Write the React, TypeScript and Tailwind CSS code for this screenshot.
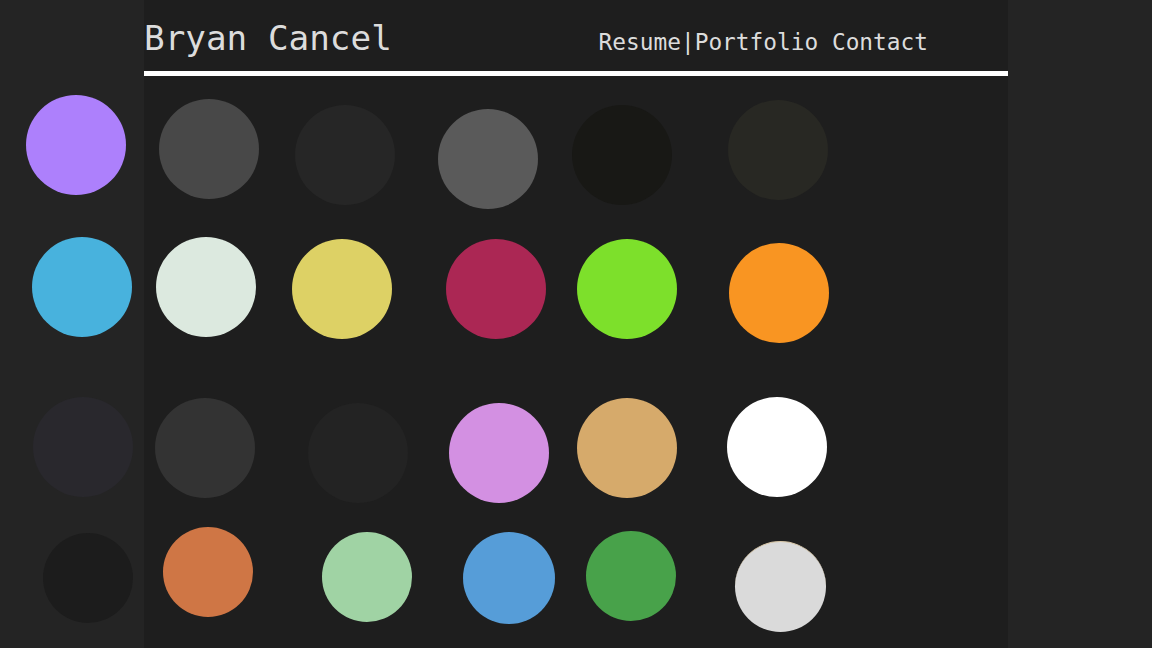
import React from "react";

const rows: { h: string; dots: string[] }[] = [
  {
    h: "h-[142px]",
    dots: [
      "ml-[26px] mt-0 w-[100px] h-[100px] bg-[#ad80fc]",
      "ml-[33px] mt-[4px] w-[100px] h-[100px] bg-[#484848]",
      "ml-[36px] mt-[10px] w-[100px] h-[100px] bg-[#262626]",
      "ml-[43px] mt-[14px] w-[100px] h-[100px] bg-[#5a5a5a]",
      "ml-[34px] mt-[10px] w-[100px] h-[100px] bg-[#181815]",
      "ml-[56px] mt-[5px] w-[100px] h-[100px] bg-[#282823]",
    ],
  },
  {
    h: "h-[160px]",
    dots: [
      "ml-[32px] mt-0 w-[100px] h-[100px] bg-[#48b2dd]",
      "ml-[24px] mt-0 w-[100px] h-[100px] bg-[#dce9df]",
      "ml-[36px] mt-[2px] w-[100px] h-[100px] bg-[#ddd165]",
      "ml-[54px] mt-[2px] w-[100px] h-[100px] bg-[#ab2754]",
      "ml-[31px] mt-[2px] w-[100px] h-[100px] bg-[#7de02b]",
      "ml-[52px] mt-[6px] w-[100px] h-[100px] bg-[#f99522]",
    ],
  },
  {
    h: "h-[130px]",
    dots: [
      "ml-[33px] mt-0 w-[100px] h-[100px] bg-[#29282d]",
      "ml-[22px] mt-[1px] w-[100px] h-[100px] bg-[#333333]",
      "ml-[53px] mt-[6px] w-[100px] h-[100px] bg-[#232323]",
      "ml-[41px] mt-[6px] w-[100px] h-[100px] bg-[#d390e2]",
      "ml-[28px] mt-[1px] w-[100px] h-[100px] bg-[#d6aa6b]",
      "ml-[50px] mt-0 w-[100px] h-[100px] bg-[#ffffff]",
    ],
  },
  {
    h: "h-[121px]",
    dots: [
      "ml-[43px] mt-[6px] w-[90px] h-[90px] bg-[#1c1c1c]",
      "ml-[30px] mt-0 w-[90px] h-[90px] bg-[#cf7645]",
      "ml-[69px] mt-[5px] w-[90px] h-[90px] bg-[#a0d3a4]",
      "ml-[51px] mt-[5px] w-[92px] h-[92px] bg-[#569dd8]",
      "ml-[31px] mt-[4px] w-[90px] h-[90px] bg-[#48a24a]",
      "ml-[59px] mt-[14px] w-[91px] h-[91px] bg-[#dadada] border-t border-[#d8c7a8]",
    ],
  },
];

export default function App() {
  return (
    <div className="min-h-screen w-full bg-[#242424] overflow-hidden">
      <div className="mx-auto w-[864px] h-[648px] bg-[#1e1e1e] text-[#dcdcdc] font-['DejaVu_Sans_Mono',monospace]">
        <header className="flex items-baseline pt-[18px]">
          <h1 className="text-[34.3px] leading-[40px] font-normal">Bryan Cancel</h1>
          <nav className="ml-auto mr-[80px] text-[22.8px] leading-[28px]">
            <span>Resume|Portfolio</span> <span>Contact</span>
          </nav>
        </header>
        <div className="mt-[13px] h-[5px] bg-white" />
        <div className="ml-[-144px] w-[1008px] mt-[19px] flex flex-col">
          {rows.map((r, i) => (
            <div key={i} className={"flex items-start " + r.h}>
              {r.dots.map((d, j) => (
                <div key={j} className={"shrink-0 rounded-full " + d} />
              ))}
            </div>
          ))}
        </div>
      </div>
    </div>
  );
}
